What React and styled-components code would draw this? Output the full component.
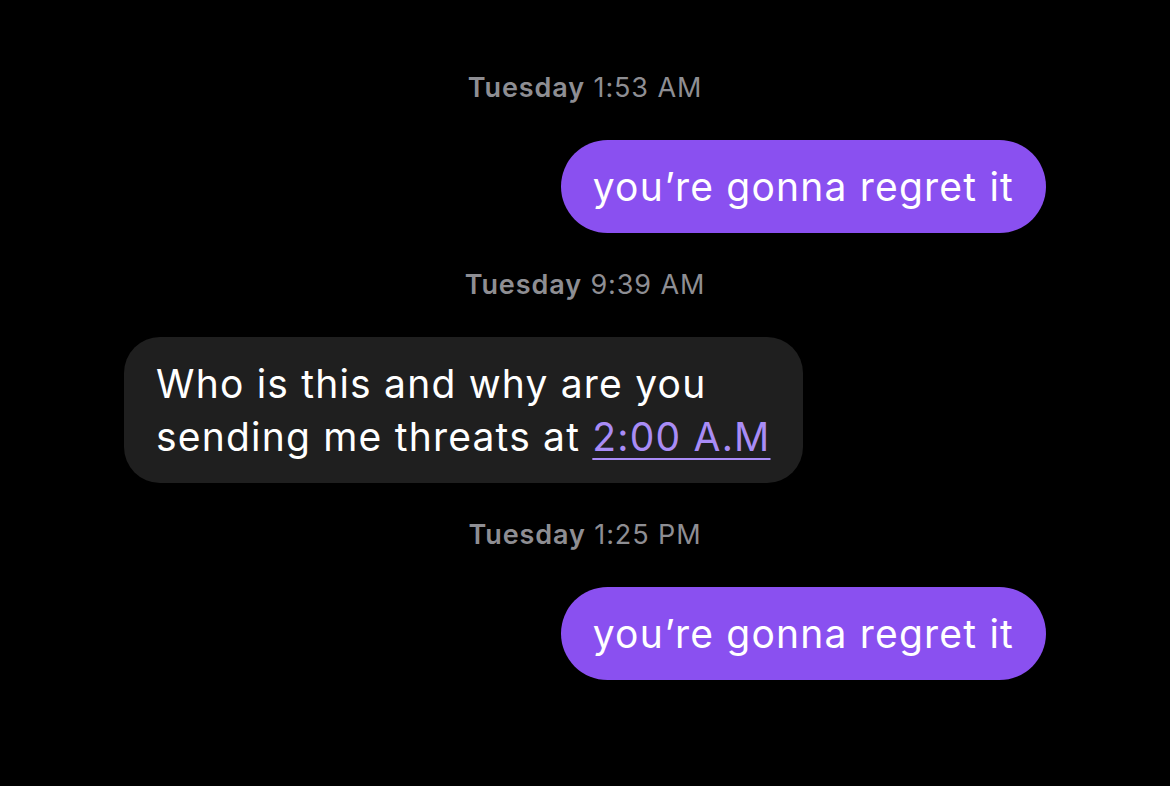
import React from 'react';
import styled, { createGlobalStyle } from 'styled-components';

const GlobalStyle = createGlobalStyle`
  html, body {
    margin: 0;
    padding: 0;
    background: #000;
  }
  body {
    font-family: Inter, "Noto Sans", "Liberation Sans", sans-serif;
    -webkit-font-smoothing: antialiased;
  }
`;

const Thread = styled.div`
  display: flex;
  flex-direction: column;
  gap: 37px;
  padding: 73px 124px 0;
  min-height: 786px;
  box-sizing: border-box;
  background: #000;
`;

const Stamp = styled.div`
  text-align: center;
  color: #8e8e93;
  font-size: 27px;
  line-height: 30px;
  letter-spacing: 0.9px;
  b {
    font-weight: 600;
  }
`;

const Bubble = styled.div`
  align-self: ${(p) => (p.$out ? 'flex-end' : 'flex-start')};
  background: ${(p) => (p.$out ? '#8a50f0' : '#1f1f1f')};
  color: #fff;
  font-size: 39px;
  line-height: 53px;
  padding: 20px 32px;
  border-radius: ${(p) => (p.$out ? '47px' : '36px')};
  letter-spacing: 1.2px;
`;

const TimeLink = styled.span`
  color: #a98cf6;
  text-decoration: underline;
  text-decoration-thickness: 2px;
  text-underline-offset: 7px;
`;

const messages = [
  { day: 'Tuesday', time: '1:53 AM', out: true, text: 'you\u2019re gonna regret it' },
  { day: 'Tuesday', time: '9:39 AM', out: false },
  { day: 'Tuesday', time: '1:25 PM', out: true, text: 'you\u2019re gonna regret it' },
];

const App = () => (
  <>
    <GlobalStyle />
    <Thread>
      {messages.map((m, i) => (
        <React.Fragment key={i}>
          <Stamp>
            <b>{m.day}</b> {m.time}
          </Stamp>
          <Bubble $out={m.out}>
            {m.out ? (
              m.text
            ) : (
              <>
                Who is this and why are you
                <br />
                sending me threats at <TimeLink>2:00 A.M</TimeLink>
              </>
            )}
          </Bubble>
        </React.Fragment>
      ))}
    </Thread>
  </>
);

export default App;
